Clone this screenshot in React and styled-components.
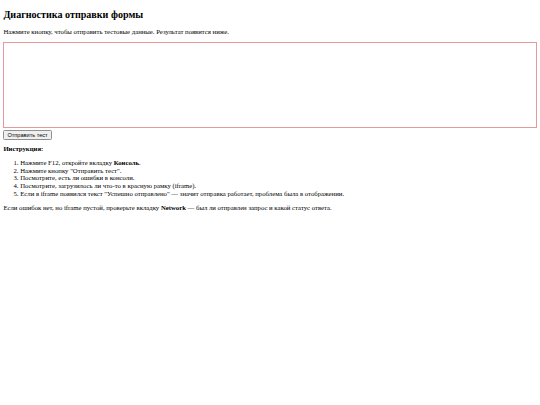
import styled, { createGlobalStyle } from 'styled-components';

const GlobalStyle = createGlobalStyle`
  html, body {
    background: #ffffff;
  }
  body {
    margin: 3.4px;
    font-family: "Liberation Serif", "Times New Roman", serif;
    font-size: 6.72px;
    color: #000000;
  }
`;

const steps = [
  <>Нажмите F12, откройте вкладку <b>Консоль</b>.</>,
  <>Нажмите кнопку "Отправить тест".</>,
  <>Посмотрите, есть ли ошибки в консоли.</>,
  <>Посмотрите, загрузилось ли что-то в красную рамку (iframe).</>,
  <>Если в iframe появился текст "Успешно отправлено" — значит отправка работает, проблема была в отображении.</>,
];

const App = () => {
  return (
    <Page>
      <GlobalStyle />
      <Title>Диагностика отправки формы</Title>
      <Text>Нажмите кнопку, чтобы отправить тестовые данные. Результат появится ниже.</Text>
      <ResultFrame title="result" />
      <SendButton type="button">Отправить тест</SendButton>
      <Heading>Инструкция:</Heading>
      <Steps>
        {steps.map((step, i) => (
          <li key={i}>{step}</li>
        ))}
      </Steps>
      <Text>
        Если ошибок нет, но iframe пустой, проверьте вкладку <b>Network</b> — был ли отправлен запрос и какой статус ответа.
      </Text>
    </Page>
  );
};

export default App;

const Page = styled.div`
  display: block;
`;

const Title = styled.h2`
  font-size: 10.08px;
  font-weight: bold;
  margin: 6px 0 8px;
`;

const Text = styled.p`
  margin: 6.7px 0;
`;

const ResultFrame = styled.iframe`
  display: block;
  box-sizing: border-box;
  width: 100%;
  height: 86px;
  margin-top: 7px;
  border: 1px solid #e59a9a;
  background: #ffffff;
`;

const SendButton = styled.button`
  display: inline-block;
  margin-top: 1.5px;
  font-family: "Liberation Sans", Arial, sans-serif;
  font-size: 5.6px;
  padding: 1px 3px;
  color: #000000;
  background: #efefef;
  border: 1px solid #8f8f8f;
  border-radius: 1.5px;
`;

const Heading = styled.h3`
  font-size: 6.72px;
  font-weight: bold;
  margin: 5.2px 0 6.7px;
`;

const Steps = styled.ol`
  margin: 6.7px 0 6.7px;
  padding-left: 16.8px;
  line-height: 7.75px;
`;
